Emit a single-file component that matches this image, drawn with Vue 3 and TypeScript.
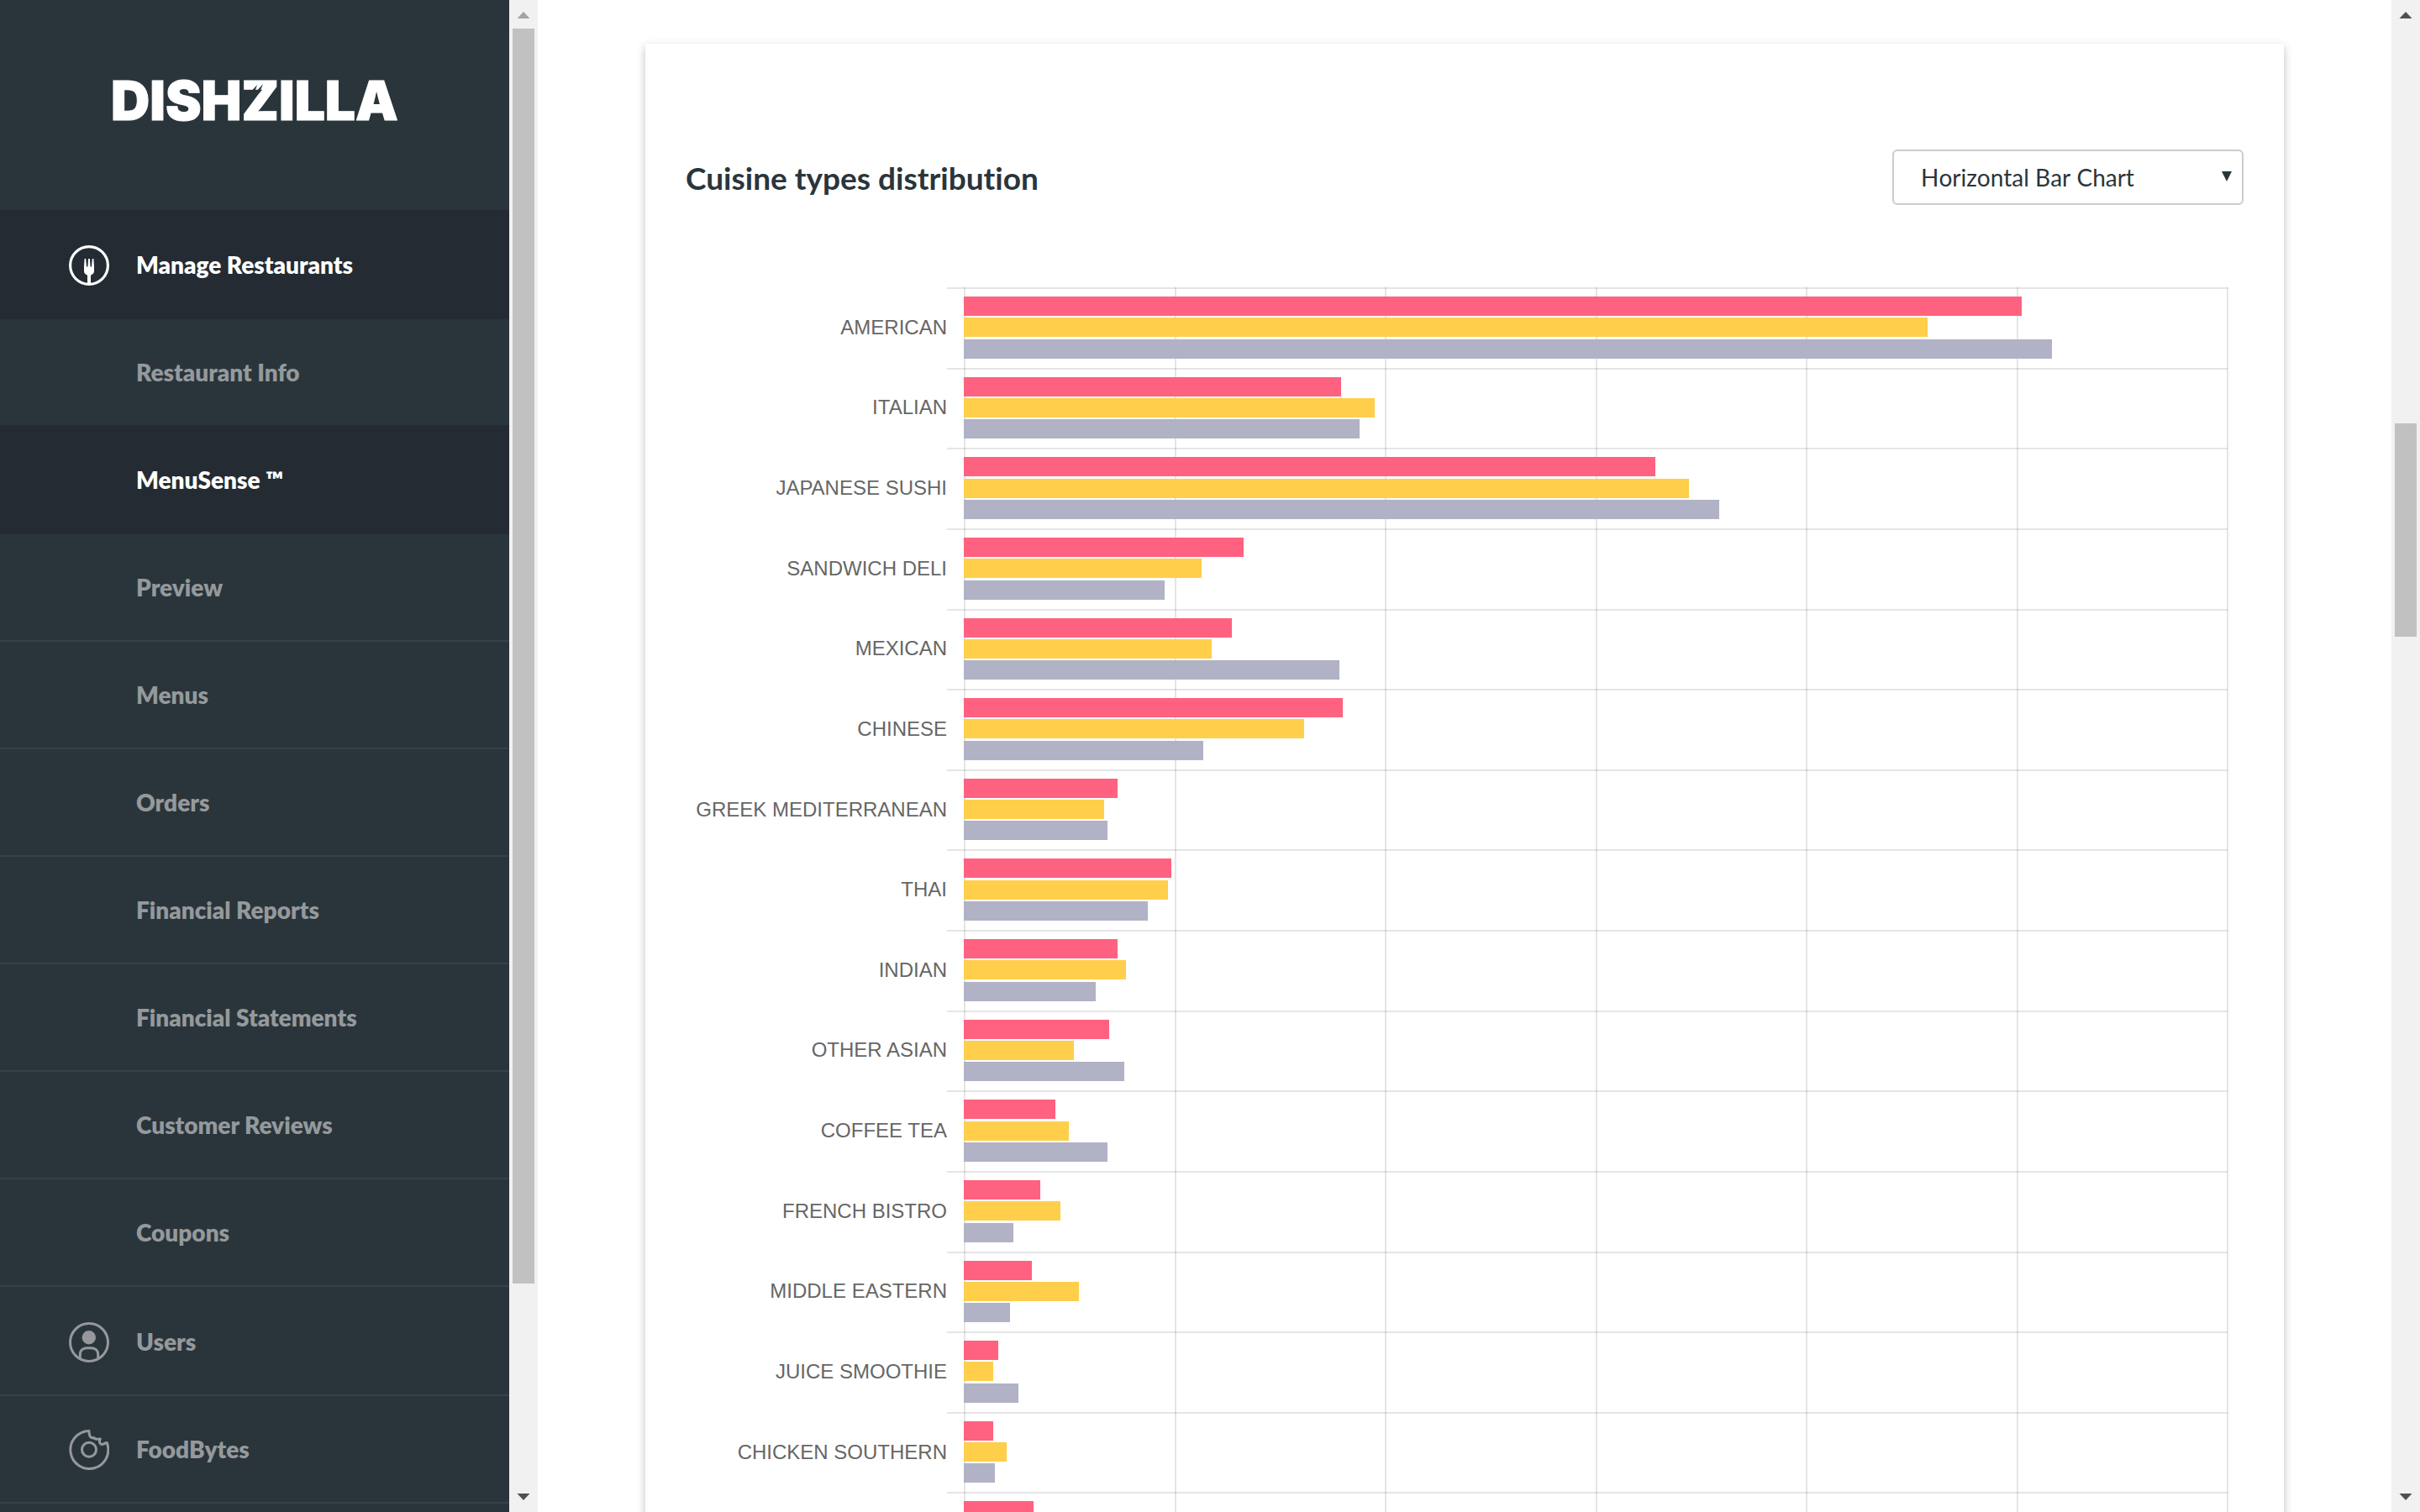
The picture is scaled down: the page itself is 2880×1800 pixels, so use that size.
<script setup lang="ts">
import { ref } from 'vue'

interface NavItem {
  label: string
  icon?: 'fork' | 'user' | 'cookie'
  active?: boolean
  groupStart?: boolean
}

interface CuisineRow {
  label: string
  values: number[]
}

interface ScrollPane {
  name: string
  before: number
  thumb: number
  after: number
}

const navItems: NavItem[] = [
  { label: 'Manage Restaurants', icon: 'fork', active: true, groupStart: true },
  { label: 'Restaurant Info' },
  { label: 'MenuSense ™', active: true },
  { label: 'Preview' },
  { label: 'Menus' },
  { label: 'Orders' },
  { label: 'Financial Reports' },
  { label: 'Financial Statements' },
  { label: 'Customer Reviews' },
  { label: 'Coupons' },
  { label: 'Users', icon: 'user', groupStart: true },
  { label: 'FoodBytes', icon: 'cookie' },
]

const chartTypes = ['Horizontal Bar Chart']
const chartType = ref(chartTypes[0])

const axisMax = 1504
const axisSteps = 6
const seriesColors = ['pink', 'yellow', 'gray']

const rows: CuisineRow[] = [
  { label: 'AMERICAN', values: [1259, 1147, 1295] },
  { label: 'ITALIAN', values: [449, 489, 471] },
  { label: 'JAPANESE SUSHI', values: [823, 863, 899] },
  { label: 'SANDWICH DELI', values: [333, 283, 239] },
  { label: 'MEXICAN', values: [319, 295, 447] },
  { label: 'CHINESE', values: [451, 405, 285] },
  { label: 'GREEK MEDITERRANEAN', values: [183, 167, 171] },
  { label: 'THAI', values: [247, 243, 219] },
  { label: 'INDIAN', values: [183, 193, 157] },
  { label: 'OTHER ASIAN', values: [173, 131, 191] },
  { label: 'COFFEE TEA', values: [109, 125, 171] },
  { label: 'FRENCH BISTRO', values: [91, 115, 59] },
  { label: 'MIDDLE EASTERN', values: [81, 137, 55] },
  { label: 'JUICE SMOOTHIE', values: [41, 35, 65] },
  { label: 'CHICKEN SOUTHERN', values: [35, 51, 37] },
  { label: '', values: [83] },
]

const sidebarScroll: ScrollPane = { name: 'sidebar', before: 0, thumb: 1494, after: 238 }
const pageScroll: ScrollPane = { name: 'page', before: 470, thumb: 254, after: 1008 }

const barWidth = (value: number): string => `${(value / axisMax) * 100}%`
</script>

<template>
  <div class="app">
    <aside class="sidebar">
      <div class="brand">
        <div class="logo">
          <span>DISHZILLA</span>
          <svg class="claws" viewBox="0 0 16 12" aria-hidden="true">
            <path d="M0 12L8 3L5 12z M6 12L15 2L11 12z" />
          </svg>
        </div>
      </div>
      <nav class="nav">
        <a
          v-for="item in navItems"
          :key="item.label"
          href="#"
          class="nav-item"
          :class="{ active: item.active, 'group-start': item.groupStart }"
        >
          <span class="nav-icon">
            <svg v-if="item.icon === 'fork'" viewBox="0 0 48 48" aria-hidden="true">
              <circle cx="24" cy="24" r="22.4" fill="none" stroke="currentColor" stroke-width="3.2" />
              <path
                fill="currentColor"
                d="M18.6 16h1.6l.8 9.5h1.4l.7-9.5h1.8l.7 9.5H27l.8-9.5h1.6l.6 9v6c0 2.400-1.500 3.500-4 4.800V47h-4V35.800c-2.500-1.300-4-2.400-4-4.800v-6z"
              />
            </svg>
            <svg v-else-if="item.icon === 'user'" viewBox="0 0 48 48" aria-hidden="true">
              <circle cx="24" cy="24" r="22.500" fill="none" stroke="currentColor" stroke-width="3" />
              <circle cx="23.800" cy="18.200" r="8.200" fill="currentColor" />
              <path
                fill="none"
                stroke="currentColor"
                stroke-width="3"
                d="M13.300 43v-4.500c0-5 3.700-7.800 8.700-7.800h4c5 0 8.700 2.800 8.700 7.800V43"
              />
            </svg>
            <svg v-else-if="item.icon === 'cookie'" viewBox="0 0 48 48" aria-hidden="true">
              <circle cx="24" cy="23.800" r="8.500" fill="none" stroke="currentColor" stroke-width="3" />
              <path
                fill="none"
                stroke="currentColor"
                stroke-width="3"
                stroke-linejoin="round"
                d="M24 1.500C24 5 24.500 8.500 27 9.600C28.500 10.200 29.500 9.400 30 9.600C30.300 11.500 33.500 11.500 37.300 10.900C35.500 14 36.800 17.700 39.800 17.400C42.500 17.200 43 15.500 45.200 15.600A22.500 22.500 0 1 1 24 1.500z"
              />
            </svg>
          </span>
          <span class="nav-label">{{ item.label }}</span>
        </a>
      </nav>
    </aside>

    <div v-for="bar in [sidebarScroll]" :key="bar.name" class="scrollbar">
      <svg class="arrow dim" viewBox="0 0 34 34" aria-hidden="true"><path d="M17 14l7.500 8h-15z" /></svg>
      <div :style="{ flexGrow: bar.before }"></div>
      <div class="thumb" :style="{ flexGrow: bar.thumb }"></div>
      <div :style="{ flexGrow: bar.after }"></div>
      <svg class="arrow" viewBox="0 0 34 34" aria-hidden="true"><path d="M17 20l7.500-8h-15z" /></svg>
    </div>

    <main class="main">
      <section class="card">
        <header class="card-header">
          <h2 id="chart-title" class="title">Cuisine types distribution</h2>
          <div class="select-wrap">
            <select v-model="chartType" class="select" aria-label="Chart type">
              <option v-for="type in chartTypes" :key="type" :value="type">{{ type }}</option>
            </select>
            <svg class="caret" viewBox="0 0 12 12" aria-hidden="true"><path d="M0 0h12L6 12z" /></svg>
          </div>
        </header>

        <div class="chart" role="group" aria-labelledby="chart-title">
          <div class="axis" aria-hidden="true">
            <span v-for="step in axisSteps" :key="step" class="axis-step"></span>
          </div>
          <ul class="rows">
            <li v-for="(row, index) in rows" :key="index" class="row">
              <span class="row-label">{{ row.label }}</span>
              <div class="track">
                <div
                  v-for="(value, series) in row.values"
                  :key="series"
                  class="bar"
                  :class="seriesColors[series]"
                  :style="{ width: barWidth(value) }"
                ></div>
              </div>
            </li>
          </ul>
        </div>
      </section>
    </main>

    <div v-for="bar in [pageScroll]" :key="bar.name" class="scrollbar">
      <svg class="arrow" viewBox="0 0 34 34" aria-hidden="true"><path d="M17 14l7.500 8h-15z" /></svg>
      <div :style="{ flexGrow: bar.before }"></div>
      <div class="thumb" :style="{ flexGrow: bar.thumb }"></div>
      <div :style="{ flexGrow: bar.after }"></div>
      <svg class="arrow" viewBox="0 0 34 34" aria-hidden="true"><path d="M17 20l7.500-8h-15z" /></svg>
    </div>
  </div>
</template>

<style>
body {
  margin: 0;
  background: #fff;
}
</style>

<style scoped>
.app {
  display: flex;
  height: 100vh;
  overflow: hidden;
  font-family: Lato, "Liberation Sans", sans-serif;
  font-variant-ligatures: none;
  color: #2a353b;
}

.sidebar {
  flex: 0 0 606px;
  overflow: hidden;
  background: #2a353b;
}

.brand {
  display: flex;
  align-items: center;
  justify-content: center;
  height: 250px;
  box-sizing: border-box;
  padding-bottom: 10px;
}

.logo {
  position: relative;
  font-family: Inter, Lato, sans-serif;
  font-size: 64px;
  line-height: 64px;
  font-weight: 900;
  font-kerning: none;
  color: #fff;
  -webkit-text-stroke: 1px #fff;
}

.claws {
  position: absolute;
  top: 10px;
  left: 166px;
  width: 16px;
  height: 12px;
  fill: #2a353b;
}

.nav {
  display: flex;
  flex-direction: column;
}

.nav-item {
  display: flex;
  align-items: center;
  gap: 32px;
  height: 126px;
  padding-left: 82px;
  border-bottom: 2px solid #33424b;
  color: #95999c;
  font-size: 28px;
  line-height: 36px;
  font-weight: 800;
  text-decoration: none;
}

.nav-item.group-start {
  padding-top: 2px;
}

.nav-item.active {
  background: #242b33;
  border-color: #242b33;
  color: #fff;
}

.nav-item:has(+ .active) {
  border-color: #242b33;
}

.nav-icon {
  flex: 0 0 48px;
  height: 48px;
  padding-top: 2px;
}

.nav-icon svg {
  display: block;
  width: 48px;
  height: 48px;
}

.scrollbar {
  flex: 0 0 34px;
  display: flex;
  flex-direction: column;
  background: #f1f1f1;
}

.arrow {
  flex: 0 0 34px;
  width: 34px;
  height: 34px;
  fill: #505050;
}

.arrow.dim {
  fill: #a3a3a3;
}

.thumb {
  margin: 0 4px;
  background: #c1c1c1;
}

.main {
  flex: 1;
  min-width: 0;
  padding: 52px 128px 0;
  background: #fff;
}

.card {
  padding: 126px 48px 48px;
  background: #fff;
  box-shadow: 0 4px 10px rgba(0, 0, 0, 0.25);
}

.card-header {
  display: flex;
  align-items: center;
  justify-content: space-between;
  margin-bottom: 98px;
}

.title {
  margin: 0;
  padding-top: 2px;
  font-size: 37px;
  line-height: 44px;
  font-weight: 700;
}

.select-wrap {
  position: relative;
  width: 418px;
}

.select {
  display: block;
  width: 100%;
  height: 66px;
  padding: 0 32px;
  border: 2px solid #c8cdd1;
  border-radius: 6px;
  background: #fff;
  color: #2a353b;
  font-family: inherit;
  font-size: 28px;
  font-kerning: none;
  appearance: none;
}

.caret {
  position: absolute;
  top: 26px;
  right: 14px;
  width: 12px;
  height: 12px;
  fill: #2a353b;
  pointer-events: none;
}

.chart {
  position: relative;
  margin-right: 19px;
}

.axis {
  position: absolute;
  inset: 0 -1px 0 331px;
  display: flex;
  border-right: 2px solid rgba(0, 0, 0, 0.1);
}

.axis-step {
  flex: 1;
  border-left: 2px solid rgba(0, 0, 0, 0.1);
}

.rows {
  position: relative;
  display: grid;
  grid-auto-rows: 1fr;
  height: 1530px;
  margin: 0;
  padding: 0;
  list-style: none;
}

.row {
  display: grid;
  grid-template-columns: 311px 1fr;
  align-items: center;
}

.row-label {
  text-align: right;
  font-family: "Liberation Sans", Arial, sans-serif;
  font-size: 24px;
  line-height: 28px;
  color: #666;
}

.track {
  display: flex;
  flex-direction: column;
  justify-content: space-between;
  align-self: stretch;
  padding: 9px 0 11px 20px;
  border-top: 2px solid rgba(0, 0, 0, 0.1);
}

.bar {
  height: 23px;
}

.bar.pink {
  background: #ff6180;
}

.bar.yellow {
  background: #ffce4b;
}

.bar.gray {
  background: #b1b2c5;
}
</style>
